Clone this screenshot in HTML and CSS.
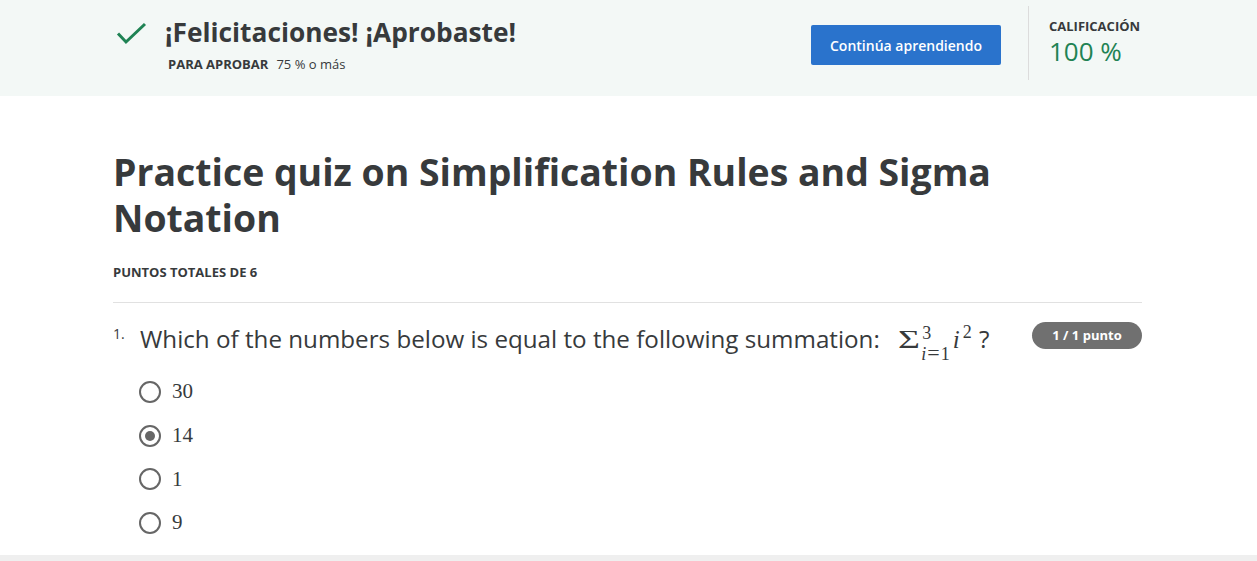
FILE: index.html
```html
<!DOCTYPE html>
<html lang="es">
<head>
<meta charset="utf-8">
<link rel="stylesheet" href="styles.css">
</head>
<body>
<header class="banner">
  <div class="banner-inner">
    <div class="result">
      <svg class="check" width="32" height="24" viewBox="0 0 32 24"><path d="M2 11.5 L10 20 L29 2" fill="none" stroke="#1f8354" stroke-width="3"/></svg>
      <div class="result-text">
        <h2 class="congrats">¡Felicitaciones! ¡Aprobaste!</h2>
        <div class="pass"><span class="pass-label">PARA APROBAR</span><span class="pass-value">75 % o más</span></div>
      </div>
    </div>
    <button class="continue">Continúa aprendiendo</button>
    <div class="grade">
      <div class="grade-label">CALIFICACIÓN</div>
      <div class="grade-value">100 %</div>
    </div>
  </div>
</header>
<main class="content">
  <h1 class="quiz-title">Practice quiz on Simplification Rules and Sigma Notation</h1>
  <div class="points">PUNTOS TOTALES DE 6</div>
  <hr class="rule">
  <div class="question">
    <span class="qnum">1.</span>
    <div class="qtext">Which of the numbers below is equal to the following summation: <span class="math"><span class="sigma">Σ</span><span class="limits"><span class="sup">3</span><span class="sub"><i>i</i><span class="eq">=</span>1</span></span><i class="var">i</i><span class="pow">2</span></span> ?</div>
    <span class="badge">1 / 1 punto</span>
  </div>
  <ul class="options">
    <li class="option"><span class="radio"></span><span class="val">30</span></li>
    <li class="option"><span class="radio checked"></span><span class="val">14</span></li>
    <li class="option"><span class="radio"></span><span class="val">1</span></li>
    <li class="option"><span class="radio"></span><span class="val">9</span></li>
  </ul>
</main>
<div class="footer-strip"></div>
</body>
</html>
```
FILE: styles.css
```css
* { box-sizing: border-box; }
html, body { margin: 0; padding: 0; }
body {
  font-family: "Open Sans", "Noto Sans", sans-serif;
  color: #373a3c;
  background: #fff;
  width: 1257px;
  height: 561px;
  overflow: hidden;
  position: relative;
}
.banner {
  background: #f3f8f6;
  height: 96px;
}
.banner-inner {
  margin: 0 115px 0 113px;
  display: flex;
  align-items: flex-start;
  height: 96px;
}
.result {
  display: flex;
  align-items: flex-start;
  flex: 1;
  padding-top: 16px;
}
.check { margin: 6px 0 0 3px; flex: none; }
.result-text { margin-left: 17px; }
.congrats {
  margin: 0;
  font-size: 26.3px;
  font-weight: 700;
  line-height: 32px;
  color: #373a3c;
}
.pass { margin-top: 8px; margin-left: 3px; font-size: 13px; line-height: 17px; }
.pass-label { font-weight: 700; margin-right: 8px; }
.pass-value { color: #373a3c; }
.continue {
  margin-top: 25px;
  width: 190px;
  height: 40px;
  background: #2a73cc;
  border: none;
  border-radius: 2px;
  color: #fff;
  font-family: "Open Sans", sans-serif;
  font-size: 14px;
  font-weight: 600;
  padding: 0;
}
.grade {
  margin-left: 27px;
  margin-top: 6px;
  height: 74px;
  border-left: 1px solid #dcdcdc;
  padding: 12px 0 0 20px;
  width: 114px;
}
.grade-label { font-size: 13px; font-weight: 700; line-height: 17px; }
.grade-value { font-size: 26px; color: #1f8354; line-height: 30px; margin-top: 1px; }

.content { margin: 0 115px 0 113px; padding-top: 53px; }
.quiz-title {
  margin: 0;
  font-size: 37.4px;
  line-height: 46px;
  font-weight: 700;
  max-width: 920px;
  color: #373a3c;
}
.points { margin-top: 22px; font-size: 13px; font-weight: 700; line-height: 18px; }
.rule { border: none; border-top: 1px solid #e1e1e1; margin: 21px 0 0; }
.question { display: flex; align-items: flex-start; margin-top: 16px; }
.qnum { font-size: 14px; width: 27px; line-height: 20px; margin-top: 5px; }
.qtext { font-size: 24.2px; line-height: 40px; height: 40px; flex: 1; margin-top: 0; white-space: nowrap; }
.math { font-family: "Liberation Serif", "DejaVu Serif", serif; margin-left: 12px; margin-right: 1px; }
.sigma { font-size: 26px; display: inline-block; transform: scaleX(1.45); transform-origin: left center; margin-right: 8px; }
.limits {
  display: inline-block;
  vertical-align: -12px;
  font-size: 18px;
  line-height: 20px;
}
.limits .sup, .limits .sub { display: block; }
.limits .sup { margin-left: 1px; }
.limits .eq { margin: 0 1px; font-size: 22px; }
.var { font-size: 25px; margin-left: 3px; }
.pow { font-size: 18px; vertical-align: 10px; line-height: 1; margin-left: 3px; }
.badge {
  margin-top: 3px;
  background: #707070;
  color: #fff;
  font-size: 13px;
  font-weight: 700;
  border-radius: 14px;
  width: 110px;
  height: 27px;
  line-height: 27px;
  text-align: center;
}
.options { list-style: none; margin: 11px 0 0 26px; padding: 0; }
.option { display: flex; align-items: center; height: 43.7px; }
.radio {
  width: 22px; height: 22px;
  border: 2px solid #666;
  border-radius: 50%;
  display: inline-flex; align-items: center; justify-content: center;
}
.radio.checked::after {
  content: ""; width: 10px; height: 10px; border-radius: 50%; background: #666;
}
.val { font-family: "Liberation Serif", "DejaVu Serif", serif; font-size: 21px; margin-left: 11px; color: #373a3c; }
.footer-strip { position: absolute; left: 0; right: 0; bottom: 0; height: 6px; background: #efefef; }
```
